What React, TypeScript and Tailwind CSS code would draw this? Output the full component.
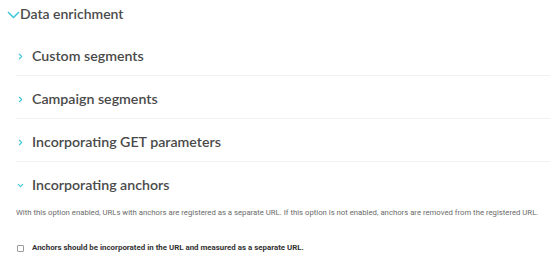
import { ChevronDown, ChevronRight } from "lucide-react";

const sections = ["Custom segments", "Campaign segments", "Incorporating GET parameters"];

export default function App() {
  return (
    <div className="w-[550px] h-[273px] bg-white overflow-hidden font-['Lato',sans-serif] text-[#4a4a4a]">
      {/* Header */}
      <div className="flex items-center h-[33px] pb-[5px] box-border pl-[7px]">
        <svg width="13" height="9" viewBox="0 0 13 9" className="mt-[1px]">
          <polyline points="1,2 6.5,7.5 12,2" fill="none" stroke="#3cc6d6" strokeWidth="1.5" />
        </svg>
        <span className="text-[14px] font-semibold text-[#4b4b4b] leading-none">Data enrichment</span>
      </div>

      <div className="pl-[16px]">
        {sections.map((s) => (
          <div key={s} className="flex items-center h-[43px] border-b border-[#f1f1f1] pt-[5px] box-border">
            <ChevronRight className="w-[9px] h-[9px] text-[#3cc6d6]" strokeWidth={3} />
            <span className="ml-[7px] text-[14.2px] font-semibold text-[#4a4a4a] leading-none">{s}</span>
          </div>
        ))}

        <div className="flex items-center h-[43px] pt-[3px] box-border">
          <ChevronDown className="w-[9px] h-[9px] text-[#3cc6d6]" strokeWidth={3} />
          <span className="ml-[7px] text-[14.2px] font-semibold text-[#4a4a4a] leading-none">Incorporating anchors</span>
        </div>

        <p className="text-[7.74px] text-[#6b6b6b] leading-[8px] mt-[4px] whitespace-nowrap font-['Roboto',sans-serif]">
          With this option enabled, URLs with anchors are registered as a separate URL. If this option is not enabled, anchors are removed from the registered URL.
        </p>

        <label className="flex items-center mt-[27px] pl-[1px] gap-[8px]">
          <span className="w-[7px] h-[7px] border border-[#9a9a9a] rounded-[1px] bg-white" />
          <span className="text-[7.9px] font-bold text-[#333] leading-[8px] font-['Roboto',sans-serif]">
            Anchors should be incorporated in the URL and measured as a separate URL.
          </span>
        </label>
      </div>
    </div>
  );
}
